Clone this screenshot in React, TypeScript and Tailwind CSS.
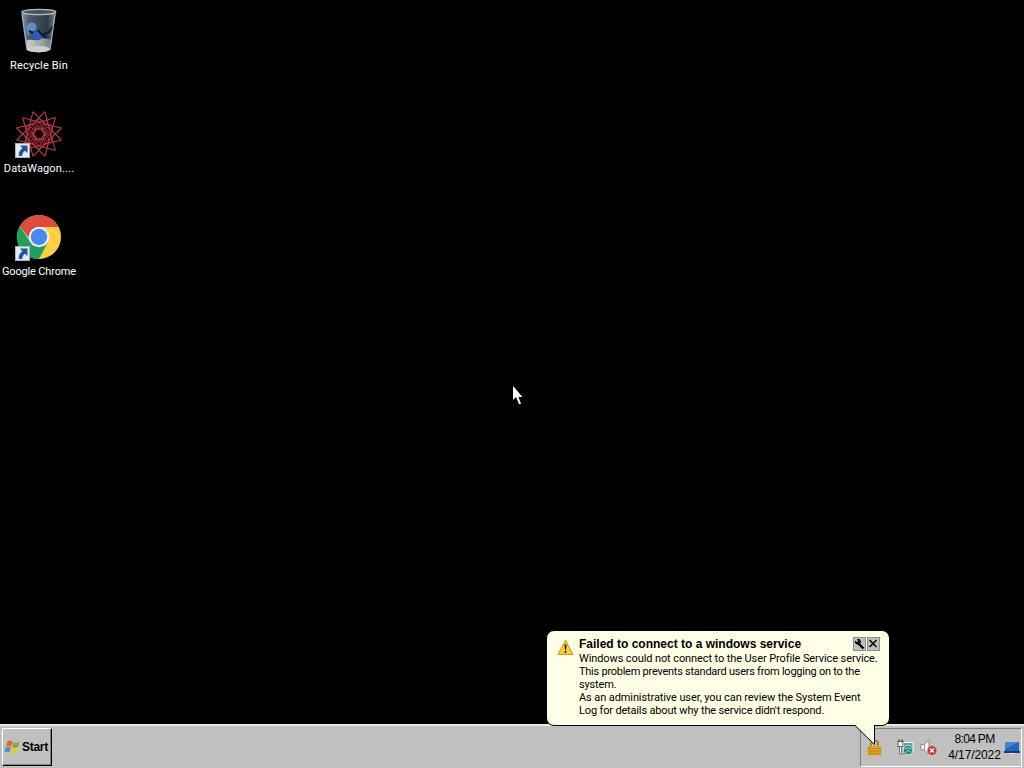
import type { ReactNode } from 'react';

function ShortcutArrow() {
    return (
        <svg className="absolute left-0 bottom-0" width="15" height="15" viewBox="0 0 15 15">
            <rect width="15" height="15" fill="#e4eaf0" />
            <rect x="0.5" y="0.5" width="14" height="14" fill="none" stroke="#a9b0b8" />
            <path d="M5 2.5H12.5V10L10 7.8C8.2 9 7.4 10.5 7.2 13H3.8C3.4 9.6 4.8 7 7.4 5.3Z" fill="#1c559e" />
        </svg>
    );
}

function RecycleBinIcon() {
    return (
        <svg width="48" height="48" viewBox="0 0 48 48">
            <defs>
                <linearGradient id="glass" x1="0" x2="1">
                    <stop offset="0" stopColor="#8a97a2" />
                    <stop offset="0.2" stopColor="#4c5d6e" />
                    <stop offset="0.75" stopColor="#2c3a48" />
                    <stop offset="1" stopColor="#7b8790" />
                </linearGradient>
                <linearGradient id="paper" x1="0" x2="1">
                    <stop offset="0" stopColor="#cfd2d2" />
                    <stop offset="0.5" stopColor="#a5aaab" />
                    <stop offset="1" stopColor="#74797b" />
                </linearGradient>
            </defs>
            <path d="M6.5 5L12 43C14 46 33 46 35 43L41 5Z" fill="url(#glass)" />
            <path d="M11 34C16 31 21 35 25 32C30 30 34 32 37 33L35 43C32 46 15 46 12 43Z" fill="url(#paper)" />
            <path d="M12.5 41C18 38 29 38 34.5 41L34 43C30 46 17 46 13 43Z" fill="#c9cdcd" />
            <path d="M11 21C12 15 19 14 21 18C23 22 19 25 16 24L13 29Z" fill="#5c8fc4" />
            <path d="M17 26L23 24L27 29L25 33L16 32L19 29Z" fill="#245fc0" />
            <path d="M14 24L18 26M23 23L27 28L34 25L38 19M28 28L31 31" stroke="#101b2a" strokeWidth="2" fill="none" />
            <path d="M7 7L12 43M40 7L35 43" stroke="#a7b0b6" strokeWidth="1.2" fill="none" />
            <ellipse cx="23.8" cy="5" rx="17" ry="2.6" fill="#46535f" stroke="#b4bcc2" strokeWidth="1.3" />
        </svg>
    );
}

const spokes = [0, 30, 60, 90, 120, 150, 180, 210, 240, 270, 300, 330];
const petals = [0, 60, 120, 180, 240, 300];

function DataWagonIcon() {
    return (
        <svg width="48" height="48" viewBox="0 0 48 48" fill="none" stroke="#b83a4c" strokeWidth="1.1">
            <circle cx="24" cy="24" r="15" fill="#2a080d" stroke="none" />
            {spokes.map((deg) => (
                <path key={deg} transform={`rotate(${deg + 15} 24 24)`} d="M24 0.8L15 17M24 0.8L33 17" />
            ))}
            {petals.map((deg) => (
                <g key={deg} transform={`rotate(${deg} 24 24)`} strokeWidth="0.8">
                    <circle cx="24" cy="14" r="4.2" />
                    <circle cx="24" cy="14.5" r="2" />
                    <path d="M20 18L24 20L28 18" />
                </g>
            ))}
            <circle cx="24" cy="24" r="5.5" strokeWidth="1.6" strokeDasharray="2 1.4" />
            <circle cx="24" cy="24" r="3.6" fill="#0c0204" stroke="none" />
        </svg>
    );
}

function ChromeIcon() {
    return (
        <svg width="48" height="48" viewBox="0 0 48 48">
            <circle cx="24" cy="24" r="22" fill="#fdcf45" />
            <path d="M24 14H43.6A22 22 0 0 0 4.9 13L15 26Z" fill="#dd4b3e" />
            <path d="M4.9 13A22 22 0 0 0 24 46L33 29L24 32L15.3 29Z" fill="#1fa15d" />
            <circle cx="24" cy="24" r="10.2" fill="#f4f4f4" />
            <circle cx="24" cy="24" r="8.2" fill="#4a8af0" />
        </svg>
    );
}

function DesktopIcon({ label, labelClass, shortcut, children }: { label: string; labelClass: string; shortcut?: boolean; children: ReactNode }) {
    return (
        <div className="flex flex-col items-center w-[78px] h-[103px]">
            <div className="relative w-12 h-12">
                {children}
                {shortcut && <ShortcutArrow />}
            </div>
            <span className={`mt-1 text-[11px] leading-[14px] text-white whitespace-nowrap font-[Roboto,sans-serif] ${labelClass}`}>{label}</span>
        </div>
    );
}

function Balloon() {
    return (
        <div className="absolute left-[546px] top-[630px] w-[344px] h-[96px] bg-[#ffffe6] border border-black rounded-[8px] flex pl-[10px] pt-[7px]">
            <svg className="mt-[1px] shrink-0" width="17" height="17" viewBox="0 0 17 17">
                <path d="M8.5 1.2L16 15.5H1Z" fill="#f8cf35" stroke="#c99b1c" strokeLinejoin="round" />
                <path d="M7.5 5.5H9.5L9 11H8ZM7.6 12H9.4V13.8H7.6Z" fill="#1d1705" />
            </svg>
            <div className="ml-[5px] text-[11px] leading-[13px] text-black whitespace-nowrap font-[Roboto,sans-serif]">
                <h1 className="font-bold text-[12px] leading-[13px] mb-[1px] font-['Liberation_Sans',Arial,sans-serif]">Failed to connect to a windows service</h1>
                <p className="tracking-[-0.1px]">Windows could not connect to the User Profile Service service.</p>
                <p className="tracking-[-0.25px]">This problem prevents standard users from logging on to the</p>
                <p className="tracking-[-0.15px]">system.</p>
                <p className="tracking-[-0.1px]">As an administrative user, you can review the System Event</p>
                <p className="tracking-[-0.16px]">Log for details about why the service didn't respond.</p>
            </div>

            {/* Options and close */}
            <div className="absolute right-[9px] top-[6px] flex gap-[1px]">
                <svg width="13" height="14" viewBox="0 0 13 14">
                    <rect x="0.5" y="0.5" width="12" height="13" fill="#c0c0c0" stroke="#8c8c88" />
                    <path d="M5.5 6.5L10.5 11.5" stroke="#000" strokeWidth="2.4" />
                    <path d="M2 3.5L4.2 5.2L5.2 4.2L4 2H6.5L8 4.5L7.2 7L4.5 7.8L2 6Z" fill="#000" />
                </svg>
                <svg width="13" height="14" viewBox="0 0 13 14">
                    <rect x="0.5" y="0.5" width="12" height="13" fill="#c0c0c0" stroke="#8c8c88" />
                    <path d="M2.5 3L9.5 10M9.5 3L2.5 10" stroke="#000" strokeWidth="1.5" />
                </svg>
            </div>

            {/* Tail */}
            <svg className="absolute left-[307px] top-[93px]" width="24" height="22" viewBox="0 0 24 22">
                <path d="M1 0V1L20.5 20.5V0Z" fill="#ffffe6" />
                <path d="M1 1.5L20.5 20.5V1" fill="none" stroke="#000" />
            </svg>
        </div>
    );
}

function WindowsFlag() {
    return (
        <svg width="17" height="17" viewBox="0 0 17 17">
            <path d="M3.5 2.5C5.5 1 7 1.5 8.5 2.5L7 7.5C5.5 6.5 4 6.5 2 7.5Z" fill="#e8632c" />
            <path d="M9.3 3C11.5 4.2 13.5 4 15.5 3L14 8C12 9 10 8.8 8 8Z" fill="#76b33d" />
            <path d="M1.8 8.5C3.8 7.2 5.3 7.5 6.8 8.5L5.3 13.5C4 12.5 2.5 12.3 0.5 13.3Z" fill="#4a8fd4" />
            <path d="M7.6 9C9.5 10 11.5 10 13.8 9L12.3 14C10.3 15 8.5 15 6.2 14Z" fill="#f3c231" />
        </svg>
    );
}

function Taskbar() {
    return (
        <footer className="h-11 bg-[#c0c0c0] border-t-2 border-[#e8e8e8] flex items-start justify-between pt-[2px] px-[2px] text-black">
            <button className="w-[50px] h-[38px] border border-t-white border-l-white border-r-black border-b-black shadow-[inset_-1px_-1px_#808080] flex items-center pl-[1px]">
                <WindowsFlag />
                <span className="font-bold text-[12px] tracking-[-0.3px] ml-[1px]">Start</span>
            </button>

            {/* Tray */}
            <div className="w-[162px] h-[39px] border border-t-[#808080] border-l-[#808080] border-r-white border-b-white flex items-center">
                <svg className="ml-[6px]" width="15" height="17" viewBox="0 0 15 17">
                    <path d="M4 7V4C4 0.5 11 0.5 11 4V7" fill="none" stroke="#a98430" strokeWidth="2" />
                    <rect x="0.5" y="7" width="14" height="9.5" fill="#dda528" />
                    <path d="M1 9.5H14M1 12H14M1 14.5H14" stroke="#b57c13" strokeWidth="0.8" />
                </svg>
                <svg className="ml-[15px]" width="17" height="17" viewBox="0 0 17 17">
                    <rect x="6.5" y="3.5" width="9.5" height="9.5" fill="#6e9a9c" stroke="#f4f6f6" />
                    <path d="M3.5 7V14H8" fill="none" stroke="#444" strokeWidth="2.4" />
                    <path d="M3.5 7V14H8" fill="none" stroke="#f2f2f2" strokeWidth="1.2" />
                    <path d="M2 0.5V3M5 0.5V3" stroke="#333" strokeWidth="1.2" />
                    <rect x="1" y="2.5" width="5" height="5" fill="#f4f4f4" stroke="#444" strokeWidth="0.8" />
                    <circle cx="11" cy="11" r="4.8" fill="#23877f" stroke="#d8eeee" strokeWidth="0.8" />
                    <path d="M7.5 10Q11 7.5 14.5 10M8.5 13.5Q11.5 10 14 12.5" fill="none" stroke="#a3d8cb" />
                </svg>
                <svg className="ml-[6px]" width="17" height="17" viewBox="0 0 17 17">
                    <path d="M1 5.5H4L9 1V15L4 11H1Z" fill="#f4f4f4" stroke="#8a8a8a" />
                    <path d="M4.5 5V11" stroke="#999" />
                    <circle cx="12" cy="11.5" r="4.7" fill="#d12f32" stroke="#e6a5a5" strokeWidth="0.6" />
                    <path d="M10 9.5L14 13.5M14 9.5L10 13.5" stroke="#fff" strokeWidth="1.4" />
                </svg>
                <div className="ml-[10px] mb-[2px] w-[55px] text-center text-[12px] leading-4 whitespace-nowrap">
                    <p className="tracking-[-0.65px]">8:04 PM</p>
                    <p className="tracking-[-0.1px]">4/17/2022</p>
                </div>
                <svg className="ml-[2px]" width="16" height="14" viewBox="0 0 16 14">
                    <path d="M1 1H15V10H1Z" fill="#2166b8" />
                    <path d="M1 1H15L1 8Z" fill="#4089d2" />
                    <path d="M0 10H16V12H0Z" fill="#173e72" />
                    <path d="M5 12H11V13H5Z" fill="#e3e8ed" />
                </svg>
            </div>
        </footer>
    );
}

export default function App() {
    return (
        <main className="relative w-[1024px] h-[768px] overflow-hidden bg-black flex flex-col font-['Liberation_Sans',Arial,sans-serif]">
            {/* Desktop */}
            <div className="grow pt-[7px]">
                <DesktopIcon label="Recycle Bin" labelClass="tracking-[0.15px]">
                    <RecycleBinIcon />
                </DesktopIcon>
                <DesktopIcon label="DataWagon...." labelClass="tracking-[0.15px]" shortcut>
                    <DataWagonIcon />
                </DesktopIcon>
                <DesktopIcon label="Google Chrome" labelClass="tracking-[-0.15px]" shortcut>
                    <ChromeIcon />
                </DesktopIcon>
            </div>

            <Taskbar />
            <Balloon />

            {/* Mouse pointer */}
            <svg className="absolute left-[512px] top-[385px]" width="12" height="20" viewBox="0 0 12 20">
                <path d="M1 1V15L4 12L7 19H9L6.5 12H10.5Z" fill="#fff" />
            </svg>
        </main>
    );
}
